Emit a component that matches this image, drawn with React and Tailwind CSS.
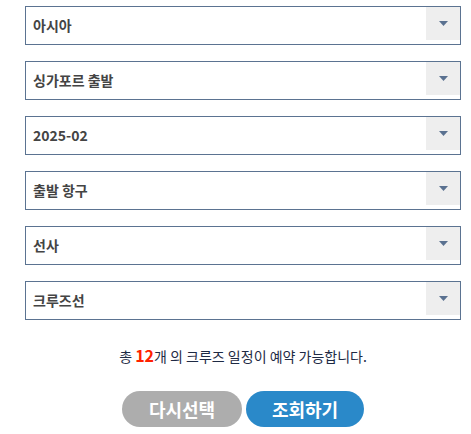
import React from "react";

const items = ["아시아", "싱가포르 출발", "2025-02", "출발 항구", "선사", "크루즈선"];

function SelectBox({ label }) {
  return (
    <div className="flex h-[39px] w-[436px] items-start border border-[#5b7391] bg-white">
      <div className="flex h-[37px] flex-1 items-center pl-[7px] text-[14px] font-bold text-[#444444]">
        {label}
      </div>
      <div className="flex h-[33px] w-[34px] items-center justify-center bg-[#eeeeee]">
        <svg width="9" height="5" viewBox="0 0 9 5">
          <path d="M0 0H9L4.5 5Z" fill="#5a7190" />
        </svg>
      </div>
    </div>
  );
}

export default function App() {
  return (
    <div
      className="w-[471px] h-[434px] bg-white"
      style={{ fontFamily: '"Noto Sans CJK KR", "Noto Sans", sans-serif' }}
    >
      <div className="ml-[25px] w-[436px]">
        <div className="flex flex-col gap-[16px] pt-[6px]">
          {items.map((it) => (
            <SelectBox key={it} label={it} />
          ))}
        </div>
        <div className="mt-[25px] text-center text-[14px] leading-[20px] text-[#1e2a44]">
          총 <span className="text-[16px] font-bold text-[#ff2200]">12</span>개 의 크루즈 일정이 예약 가능합니다.
        </div>
        <div className="mt-[25px] flex justify-center gap-[4px]">
          <button className="h-[36px] w-[120px] rounded-full bg-[#adadad] text-[18px] font-bold text-white">
            다시선택
          </button>
          <button className="h-[36px] w-[118px] rounded-full bg-[#2a89c9] text-[18px] font-bold text-white">
            조회하기
          </button>
        </div>
      </div>
    </div>
  );
}
